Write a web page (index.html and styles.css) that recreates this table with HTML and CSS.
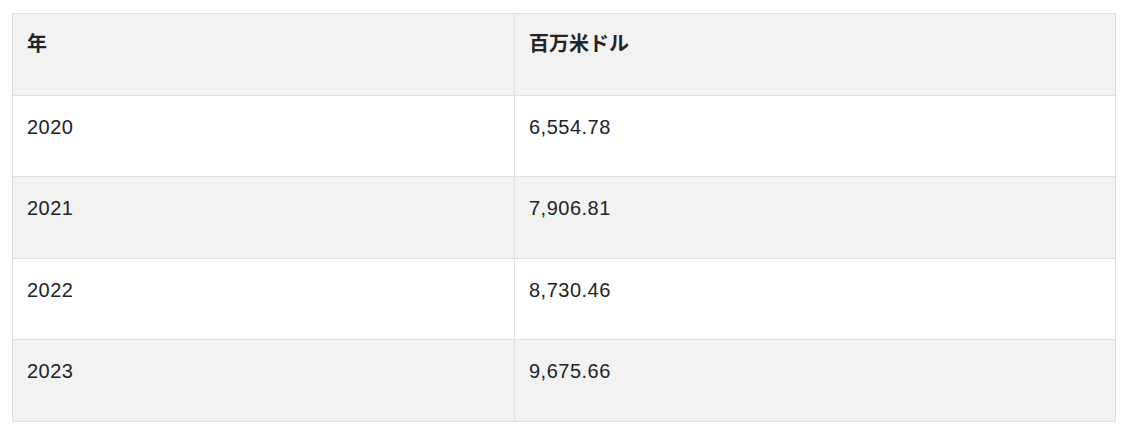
FILE: index.html
```html
<!DOCTYPE html>
<html lang="ja">
<head>
<meta charset="utf-8">
<link rel="stylesheet" href="styles.css">
</head>
<body>
<table class="data-table">
  <thead>
    <tr><th>年</th><th>百万米ドル</th></tr>
  </thead>
  <tbody>
    <tr><td>2020</td><td>6,554.78</td></tr>
    <tr><td>2021</td><td>7,906.81</td></tr>
    <tr><td>2022</td><td>8,730.46</td></tr>
    <tr><td>2023</td><td>9,675.66</td></tr>
  </tbody>
</table>
</body>
</html>
```
FILE: styles.css
```css
html, body {
  margin: 0;
  background: #ffffff;
}
body {
  padding: 13px 12px;
  font-family: "Liberation Sans", Arial, "Noto Sans CJK JP", sans-serif;
  color: #222326;
}
.data-table {
  width: 1104px;
  border-collapse: collapse;
  table-layout: fixed;
  border: 1px solid #dfe0e3;
}
.data-table th,
.data-table td {
  border: 1px solid #dfe0e3;
  text-align: left;
  vertical-align: top;
  padding: 16px 14px 34.6px;
  font-size: 20px;
  line-height: 30px;
  letter-spacing: 0.5px;
}
.data-table th:first-child,
.data-table td:first-child {
  width: 473px;
}
.data-table th {
  font-family: "Noto Sans CJK JP", sans-serif;
  font-weight: 700;
  font-size: 20px;
  letter-spacing: 0;
  padding-top: 14px;
  padding-bottom: 36.6px;
  background: #f2f2f2;
}
.data-table tbody tr:nth-child(even) td {
  background: #f2f2f2;
}
.data-table tbody tr:nth-child(odd) td {
  background: #ffffff;
}
```
